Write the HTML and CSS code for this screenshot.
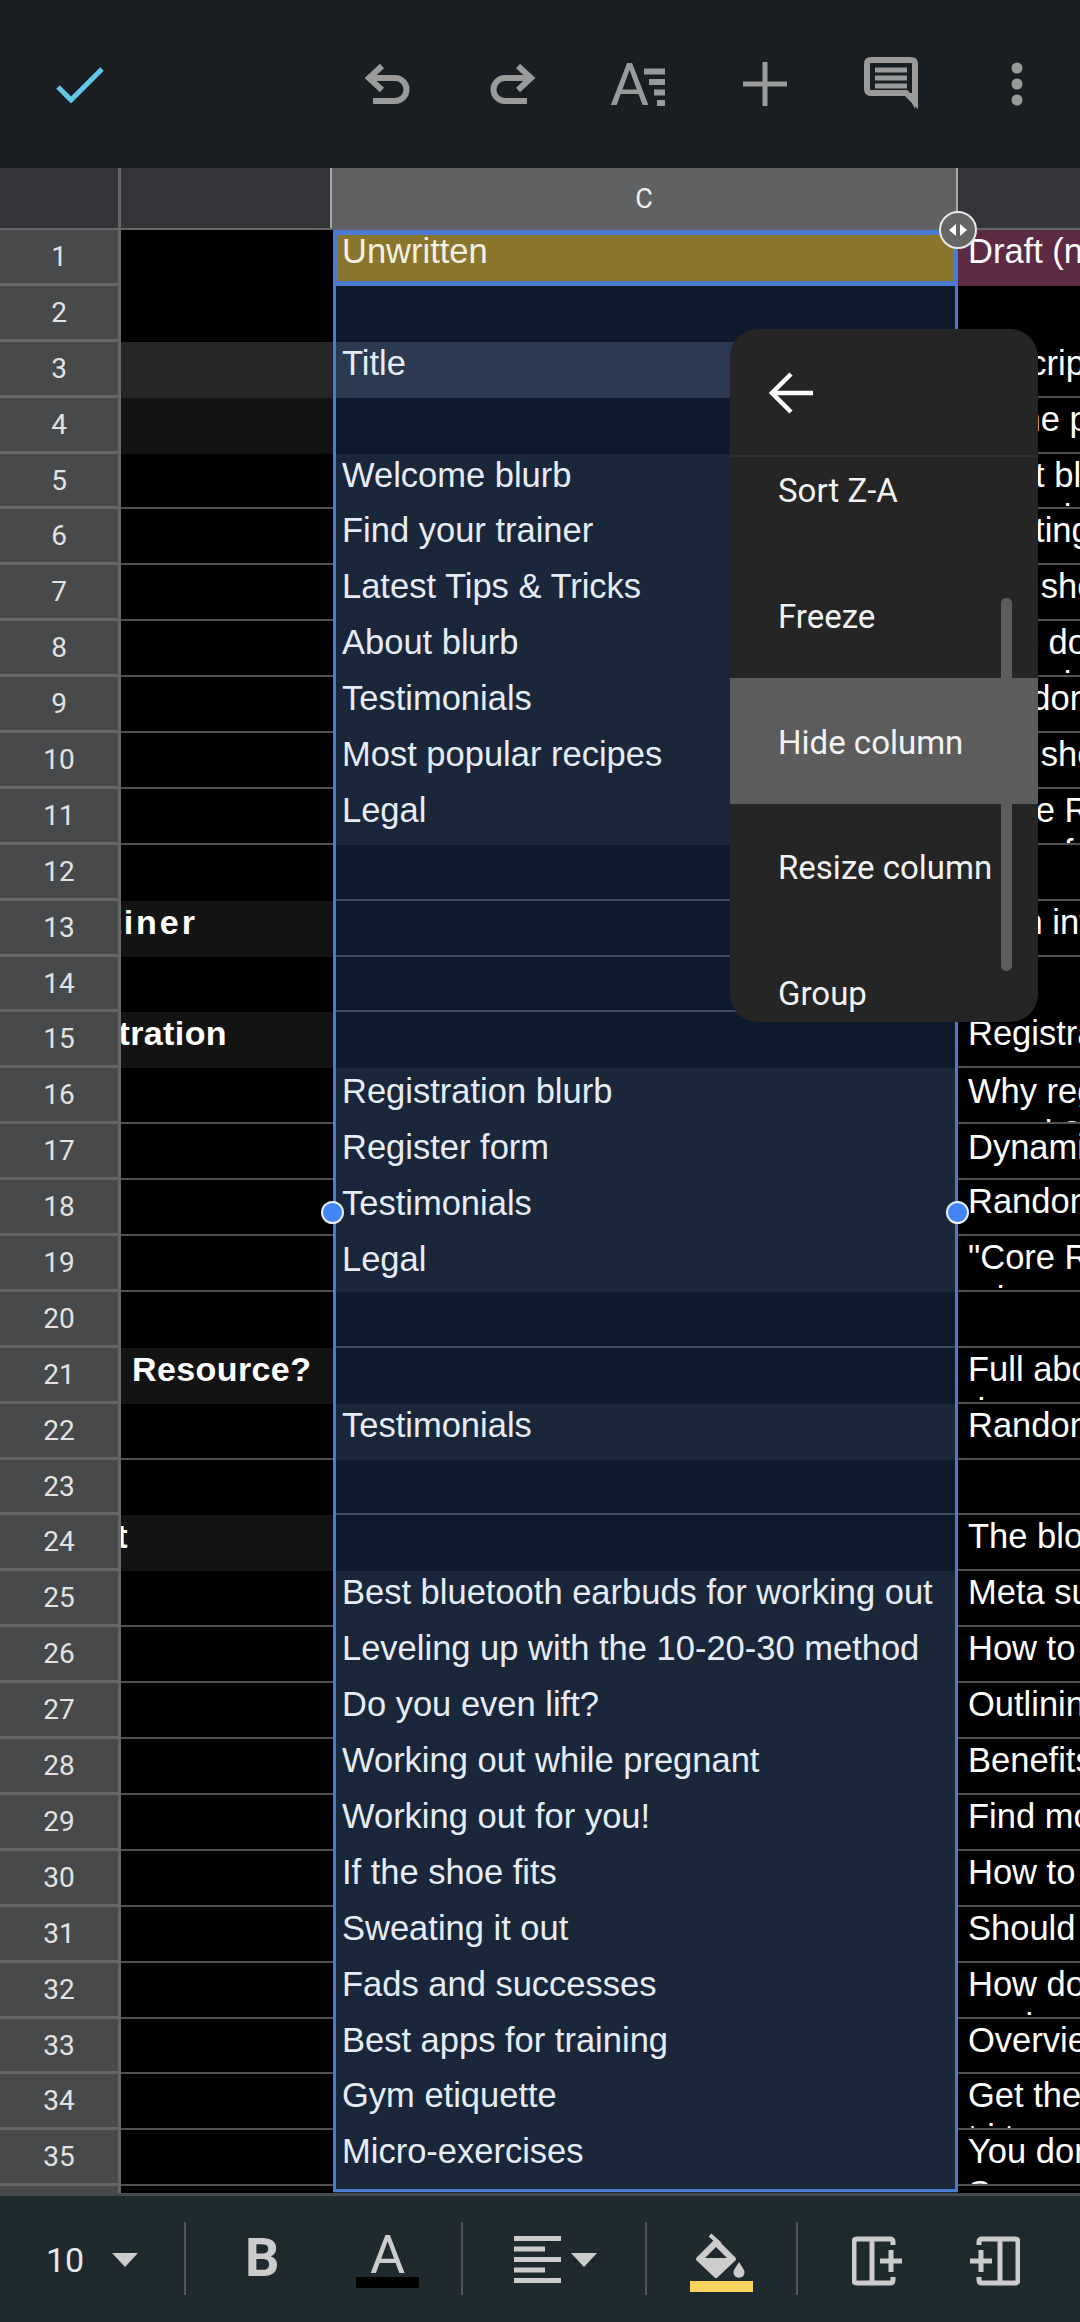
FILE: index.html
```html
<!DOCTYPE html>
<html lang="en">
<head>
    <meta charset="UTF-8">
    <meta name="viewport" content="width=device-width, initial-scale=1.0">
    <title>Content plan - Sheets</title>
    <link rel="stylesheet" href="styles.css">
</head>
<body>
<div class="page">
    <header class="topbar">
        <div class="check-slot">
            <svg width="48" height="36" viewBox="0 0 48 36"><path d="M2 20 L15 33 L46 2" fill="none" stroke="#63c7e8" stroke-width="5"/></svg>
        </div>
        <div class="top-slot">
            <svg width="46" height="44" viewBox="0 0 46 44"><path d="M18 4 L5 16 L18 28 M5 16 H31 A11.5 11.5 0 0 1 31 39 H9" fill="none" stroke="#9a9a9a" stroke-width="6"/></svg>
        </div>
        <div class="top-slot">
            <svg width="46" height="44" viewBox="0 0 46 44"><path d="M28 4 L41 16 L28 28 M41 16 H15 A11.5 11.5 0 0 0 15 39 H37" fill="none" stroke="#9a9a9a" stroke-width="6"/></svg>
        </div>
        <div class="top-slot">
            <svg width="58" height="46" viewBox="0 0 58 46">
                <text x="0" y="44" class="format-a">A</text>
                <path d="M34 10.5 H55 M39 21 H55 M44 31.500 H55 M47 42 H55" fill="none" stroke="#9a9a9a" stroke-width="6"/>
            </svg>
        </div>
        <div class="top-slot">
            <svg width="44" height="44" viewBox="0 0 44 44"><path d="M22 0 V44 M0 22 H44" stroke="#9a9a9a" stroke-width="5"/></svg>
        </div>
        <div class="top-slot">
            <svg width="54" height="54" viewBox="0 0 54 54">
                <path d="M7 3 H47 Q51 3 51 7 V45 L42 36 H7 Q3 36 3 32 V7 Q3 3 7 3 Z" fill="none" stroke="#9a9a9a" stroke-width="6"/>
                <path d="M43 36 L51 36 L51 52 Z" fill="#9a9a9a"/>
                <path d="M11 13 H43 M11 21 H43 M11 29 H43" stroke="#9a9a9a" stroke-width="5"/>
            </svg>
        </div>
        <div class="top-slot">
            <svg width="12" height="44" viewBox="0 0 12 44"><circle cx="6" cy="6" r="5.500" fill="#9a9a9a"/><circle cx="6" cy="22" r="5.500" fill="#9a9a9a"/><circle cx="6" cy="38" r="5.500" fill="#9a9a9a"/></svg>
        </div>
    </header>

    <div class="col-head">
        <div class="col-corner"></div>
        <div class="col-b"></div>
        <div class="col-c">C</div>
        <div class="col-d"></div>
    </div>

    <main class="sheet">
        <div class="rn">1</div><div class="b"></div><div class="c active">Unwritten</div><div class="d draft">Draft (needs review)</div>
        <div class="rn">2</div><div class="b"></div><div class="c"></div><div class="d"></div>
        <div class="rn">3</div><div class="b sec-top"></div><div class="c head">Title</div><div class="d ln">Description</div>
        <div class="rn">4</div><div class="b sec"></div><div class="c"></div><div class="d ln">Home page</div>
        <div class="rn">5</div><div class="b ln"></div><div class="c fill">Welcome blurb</div><div class="d ln">Meet blurb<br>&nbsp; &nbsp; &nbsp; &nbsp; &nbsp; i i</div>
        <div class="rn">6</div><div class="b ln"></div><div class="c fill">Find your trainer</div><div class="d ln">Meeting a<br>&nbsp; &nbsp; &nbsp; &nbsp; &nbsp; &nbsp; &nbsp; i</div>
        <div class="rn">7</div><div class="b ln"></div><div class="c fill">Latest Tips &amp; Tricks</div><div class="d ln">Live show</div>
        <div class="rn">8</div><div class="b ln"></div><div class="c fill">About blurb</div><div class="d ln">Who does<br>&nbsp; &nbsp; &nbsp; &nbsp; &nbsp; i &nbsp; l</div>
        <div class="rn">9</div><div class="b ln"></div><div class="c fill">Testimonials</div><div class="d ln">Random</div>
        <div class="rn">10</div><div class="b ln"></div><div class="c fill">Most popular recipes</div><div class="d ln">Live show</div>
        <div class="rn">11</div><div class="b ln"></div><div class="c fill">Legal</div><div class="d ln">"Core Resource"<br>&nbsp; &nbsp; &nbsp; &nbsp; &nbsp; f</div>
        <div class="rn">12</div><div class="b"></div><div class="c ln"></div><div class="d ln"></div>
        <div class="rn">13</div><div class="b sec end-trainer"><span>Find your trainer</span></div><div class="c ln"></div><div class="d ln">Main info</div>
        <div class="rn">14</div><div class="b"></div><div class="c ln"></div><div class="d"></div>
        <div class="rn">15</div><div class="b sec end-registration"><span>Registration</span></div><div class="c"></div><div class="d ln">Registration</div>
        <div class="rn">16</div><div class="b ln"></div><div class="c fill low">Registration blurb</div><div class="d ln low">Why register<br>&nbsp; &nbsp; &nbsp; &nbsp; it?</div>
        <div class="rn">17</div><div class="b ln"></div><div class="c fill low">Register form</div><div class="d ln low">Dynamic form</div>
        <div class="rn">18</div><div class="b ln"></div><div class="c fill low">Testimonials</div><div class="d ln">Random</div>
        <div class="rn">19</div><div class="b ln"></div><div class="c fill low">Legal</div><div class="d ln">"Core Resource"<br>&nbsp; &nbsp;i</div>
        <div class="rn">20</div><div class="b"></div><div class="c ln"></div><div class="d ln"></div>
        <div class="rn">21</div><div class="b sec start-resource"><span>Resource?</span></div><div class="c"></div><div class="d ln">Full about<br>&nbsp;i</div>
        <div class="rn">22</div><div class="b ln"></div><div class="c fill">Testimonials</div><div class="d ln">Random</div>
        <div class="rn">23</div><div class="b"></div><div class="c ln"></div><div class="d ln"></div>
        <div class="rn">24</div><div class="b sec end-post"><span>Blog Post</span></div><div class="c"></div><div class="d ln">The blog</div>
        <div class="rn">25</div><div class="b ln"></div><div class="c fill">Best bluetooth earbuds for working out</div><div class="d ln">Meta summary</div>
        <div class="rn">26</div><div class="b ln"></div><div class="c fill">Leveling up with the 10-20-30 method</div><div class="d ln">How to level</div>
        <div class="rn">27</div><div class="b ln"></div><div class="c fill">Do you even lift?</div><div class="d ln">Outlining</div>
        <div class="rn">28</div><div class="b ln"></div><div class="c fill">Working out while pregnant</div><div class="d ln">Benefits</div>
        <div class="rn">29</div><div class="b ln"></div><div class="c fill">Working out for you!</div><div class="d ln">Find more</div>
        <div class="rn">30</div><div class="b ln"></div><div class="c fill">If the shoe fits</div><div class="d ln">How to pick</div>
        <div class="rn">31</div><div class="b ln"></div><div class="c fill">Sweating it out</div><div class="d ln">Should you</div>
        <div class="rn">32</div><div class="b ln"></div><div class="c fill">Fads and successes</div><div class="d ln">How do<br>&nbsp; &nbsp; &nbsp; i</div>
        <div class="rn">33</div><div class="b ln"></div><div class="c fill">Best apps for training</div><div class="d ln">Overview</div>
        <div class="rn">34</div><div class="b ln"></div><div class="c fill">Gym etiquette</div><div class="d ln">Get the<br>t i t</div>
        <div class="rn">35</div><div class="b ln"></div><div class="c fill">Micro-exercises</div><div class="d ln">You don't<br>So</div>
        <div class="rn"></div><div class="b"></div><div class="c fill"></div><div class="d"></div>
    </main>

    <footer class="bottombar">
        <div class="size">10</div>
        <div class="caret caret-size"></div>
        <div class="sep sep-1"></div>
        <div class="bold-btn">B</div>
        <div class="color-btn">
            <span class="color-a">A</span>
            <span class="color-bar"></span>
        </div>
        <div class="sep sep-2"></div>
        <svg class="align-icon" width="48" height="48" viewBox="0 0 48 48">
            <path d="M0 2.500 H47 M0 13 H31 M0 23.500 H47 M0 34 H31 M0 44.500 H47" stroke="#cccccc" stroke-width="5"/>
        </svg>
        <div class="caret caret-align"></div>
        <div class="sep sep-3"></div>
        <svg class="fill-icon" width="64" height="62" viewBox="0 0 64 62">
            <path d="M20 4 L30 13" stroke="#cccccc" stroke-width="4"/>
            <path d="M8 28 L26 10 L44 28 L26 45 Z" fill="#cccccc" stroke="#cccccc" stroke-width="4" stroke-linejoin="round"/>
            <path d="M15 27 L26 16 L37 27 Z" fill="#1f2a2e"/>
            <path d="M49 31 L54 39 A5.500 5.500 0 1 1 44 39 Z" fill="#cccccc"/>
            <rect x="0" y="50" width="63" height="11" fill="#fad45e"/>
        </svg>
        <div class="sep sep-4"></div>
        <svg class="insert-right" width="52" height="50" viewBox="0 0 52 50">
            <path d="M41 9 V6 Q41 3 38 3 H5 Q2 3 2 6 V44 Q2 47 5 47 H38 Q41 47 41 44 V41 M20 3 V47" fill="none" stroke="#cccccc" stroke-width="5"/>
            <path d="M28 25 H50 M39 14 V36" stroke="#cccccc" stroke-width="5"/>
        </svg>
        <svg class="insert-left" width="52" height="50" viewBox="0 0 52 50">
            <path d="M11 9 V6 Q11 3 14 3 H47 Q50 3 50 6 V44 Q50 47 47 47 H14 Q11 47 11 44 V41 M32 3 V47" fill="none" stroke="#cccccc" stroke-width="5"/>
            <path d="M2 25 H24 M13 14 V36" stroke="#cccccc" stroke-width="5"/>
        </svg>
    </footer>

    <!-- selection on column C -->
    <div class="selection"></div>
    <div class="active-cell"></div>
    <div class="resize-handle">
        <svg width="20" height="14" viewBox="0 0 20 14"><path d="M8 1 L1 7 L8 13 Z M12 1 L19 7 L12 13 Z" fill="#ffffff"/></svg>
    </div>
    <div class="dot dot-left"></div>
    <div class="dot dot-right"></div>

    <!-- column menu -->
    <div class="menu">
        <div class="menu-head">
            <svg width="44" height="42" viewBox="0 0 44 42"><path d="M22 2 L3 21 L22 40 M3 21 H44" fill="none" stroke="#ffffff" stroke-width="4.500"/></svg>
        </div>
        <div class="menu-list">
            <div class="menu-item first">Sort Z-A</div>
            <div class="menu-item">Freeze</div>
            <div class="menu-item on">Hide column</div>
            <div class="menu-item">Resize column</div>
            <div class="menu-item">Group</div>
            <div class="menu-scroll"></div>
        </div>
    </div>
</div>
</body>
</html>
```

FILE: styles.css
```css
* {
    box-sizing: border-box;
}

html, body {
    margin: 0;
    background-color: #000;
}

.page {
    position: relative;
    width: 1080px;
    height: 2322px;
    display: flex;
    flex-direction: column;
    overflow: hidden;
    font-family: "Liberation Sans", Arial, sans-serif;
}

/* top toolbar */
.topbar {
    height: 168px;
    flex: none;
    background-color: #181e21;
    display: flex;
    align-items: center;
}

.check-slot {
    width: 324px;
    padding-left: 56px;
    display: flex;
    align-items: center;
    height: 100%;
    padding-top: 2px;
}

.top-slot {
    width: 126px;
    height: 100%;
    display: flex;
    align-items: center;
    justify-content: center;
}

.format-a {
    font-family: Roboto, sans-serif;
    font-size: 60px;
    fill: #9a9a9a;
}

/* column letters */
.col-head {
    height: 62px;
    flex: none;
    display: grid;
    grid-template-columns: 121px 211px 626px 122px;
    border-bottom: 2px solid #666;
    background-color: #333538;
}

.col-corner {
    border-right: 3px solid #666;
}

.col-b {
    border-right: 2px solid #aaa;
}

.col-c {
    background-color: #606163;
    border-right: 2px solid #aaa;
    color: #eee;
    font-family: Roboto, sans-serif;
    font-size: 27px;
    display: flex;
    align-items: center;
    justify-content: center;
    padding-top: 2px;
}

/* grid */
.sheet {
    flex: 1;
    min-height: 0;
    display: grid;
    grid-template-columns: 121px 212px 625px 500px;
    grid-auto-rows: 55.9px;
    width: 1458px;
    overflow: hidden;
    background-color: #000;
    color: #fff;
    font-size: 34.5px;
    line-height: 42px;
}

.rn {
    background-color: #47494b;
    border-right: 3px solid #666;
    border-bottom: 3px solid #666;
    color: #e2e2e2;
    font-family: Roboto, sans-serif;
    font-size: 28px;
    text-align: center;
    line-height: 54px;
}

.b, .c, .d {
    overflow: hidden;
    border-bottom: 2px solid transparent;
}

.b {
    display: flex;
    white-space: nowrap;
    font-weight: bold;
    font-size: 34px;
    letter-spacing: 0.4px;
}

.b.ln {
    border-bottom-color: #505050;
}

.b.sec {
    background-color: #131313;
}

.b.sec-top {
    background-color: #262626;
}

.end-trainer {
    justify-content: flex-end;
    padding-right: 135px;
    letter-spacing: 3px;
}

.end-registration {
    justify-content: flex-end;
    padding-right: 106px;
}

.end-post {
    justify-content: flex-end;
    padding-right: 205px;
}

.start-resource {
    padding-left: 11px;
}

.c {
    background-color: #0c1a2c;
    color: #e6ecf6;
    padding-left: 9px;
    white-space: nowrap;
}

.c.ln {
    border-bottom-color: #3f4b5e;
}

.c.fill {
    background-color: #1a273b;
}

.c.head {
    background-color: #2b3a50;
}

.c.active {
    background-color: #8a752c;
    color: #f2efe3;
}

.low {
    padding-top: 2px;
}

.d {
    padding-left: 10px;
    white-space: nowrap;
}

.d.ln {
    border-bottom-color: #505050;
}

.d.draft {
    background-color: #5d2a44;
}

/* bottom toolbar */
.bottombar {
    height: 129px;
    flex: none;
    position: relative;
    background-color: #1f2a2e;
    border-top: 3px solid #444a4d;
    display: flex;
    align-items: flex-start;
    color: #cccccc;
}

.size {
    margin-left: 46px;
    margin-top: 44px;
    font-family: Roboto, sans-serif;
    font-size: 34px;
    line-height: 40px;
    color: #e8e8e8;
    width: 40px;
}

.caret {
    width: 0;
    height: 0;
    border-left: 13.5px solid transparent;
    border-right: 13.5px solid transparent;
    border-top: 14px solid #cccccc;
    margin-top: 57px;
}

.caret-size {
    margin-left: 26px;
}

.caret-align {
    margin-left: 9px;
}

.sep {
    width: 2px;
    height: 73px;
    margin-top: 26px;
    background-color: #4d5659;
}

.sep-1 {
    margin-left: 46px;
}

.sep-2 {
    margin-left: 42px;
}

.sep-3 {
    margin-left: 48px;
}

.sep-4 {
    margin-left: 42px;
}

.bold-btn {
    margin-left: 59px;
    margin-top: 37px;
    width: 36px;
    font-family: Roboto, sans-serif;
    font-weight: bold;
    font-size: 54px;
    line-height: 50px;
}

.color-btn {
    margin-left: 75px;
    margin-top: 37px;
    width: 63px;
    display: flex;
    flex-direction: column;
    align-items: center;
}

.color-a {
    font-family: Roboto, sans-serif;
    font-size: 54px;
    line-height: 44px;
    height: 47px;
}

.color-bar {
    width: 63px;
    height: 11px;
    background-color: #000;
    margin-top: -3px;
}

.align-icon {
    margin-left: 51px;
    margin-top: 40px;
}

.fill-icon {
    margin-left: 43px;
    margin-top: 35px;
}

.insert-right {
    margin-left: 54px;
    margin-top: 40px;
}

.insert-left {
    margin-left: 64px;
    margin-top: 40px;
}

/* selection overlay */
.selection {
    position: absolute;
    left: 333px;
    top: 230px;
    width: 625px;
    height: 1962px;
    border: 3px solid #4a7bd0;
}

.active-cell {
    position: absolute;
    left: 333px;
    top: 230px;
    width: 625px;
    height: 56px;
    border: 5px solid #4a7bd0;
}

.resize-handle {
    position: absolute;
    left: 939px;
    top: 211px;
    width: 38px;
    height: 38px;
    border-radius: 50%;
    background-color: #666;
    border: 2px solid #e8e8e8;
    display: flex;
    align-items: center;
    justify-content: center;
}

.dot {
    position: absolute;
    top: 1201px;
    width: 23px;
    height: 23px;
    border-radius: 50%;
    background-color: #4285f4;
    border: 2px solid #e8eef8;
}

.dot-left {
    left: 321px;
}

.dot-right {
    left: 946px;
}

/* column menu */
.menu {
    position: absolute;
    left: 730px;
    top: 329px;
    width: 308px;
    height: 693px;
    border-radius: 28px;
    background-color: #252525;
    color: #f2f2f2;
    font-family: Roboto, sans-serif;
    font-size: 33px;
    display: flex;
    flex-direction: column;
    overflow: hidden;
}

.menu-head {
    height: 128px;
    flex: none;
    border-bottom: 2px solid #2f2f2f;
    padding: 43px 0 0 39px;
}

.menu-list {
    flex: 1;
    min-height: 0;
    position: relative;
    overflow: hidden;
}

.menu-item {
    height: 125.7px;
    padding: 2px 0 0 48px;
    display: flex;
    align-items: center;
    white-space: nowrap;
}

.menu-item.first {
    margin-top: -30px;
}

.menu-item.on {
    background-color: #5c5c5c;
}

.menu-scroll {
    position: absolute;
    left: 271px;
    top: 141px;
    width: 11px;
    height: 373px;
    border-radius: 5px;
    background-color: #5c5c5c;
}
```
